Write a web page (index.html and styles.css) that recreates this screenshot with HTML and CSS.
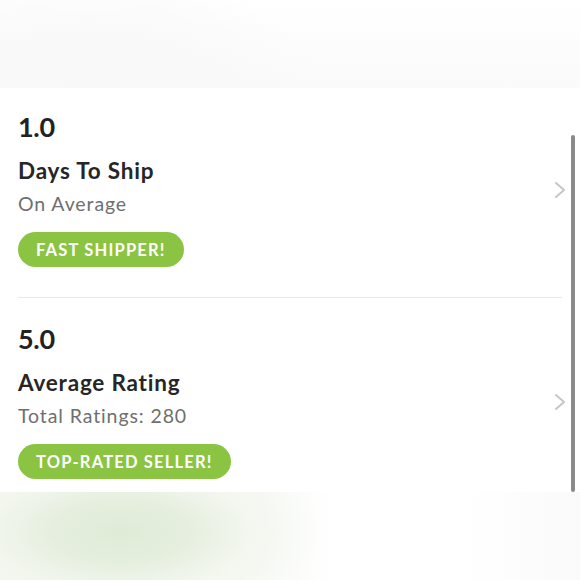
FILE: index.html
```html
<!DOCTYPE html>
<html>
<head>
<meta charset="utf-8">
<link rel="stylesheet" href="styles.css">
</head>
<body>
<div class="screen">
  <div class="top-blur"></div>
  <main class="sheet">
    <div class="row">
      <div class="content">
        <div class="value">1.0</div>
        <div class="title">Days To Ship</div>
        <div class="sub">On Average</div>
        <span class="badge">FAST SHIPPER!</span>
      </div>
      <svg class="chev" width="12" height="18" viewBox="0 0 12 18"><path d="M2 2 L10 9 L2 16" fill="none" stroke="#c6c6c8" stroke-width="2" stroke-linecap="round" stroke-linejoin="round"/></svg>
    </div>
    <div class="divider"></div>
    <div class="row row2">
      <div class="content">
        <div class="value">5.0</div>
        <div class="title">Average Rating</div>
        <div class="sub">Total Ratings: 280</div>
        <span class="badge">TOP-RATED SELLER!</span>
      </div>
      <svg class="chev" width="12" height="18" viewBox="0 0 12 18"><path d="M2 2 L10 9 L2 16" fill="none" stroke="#c6c6c8" stroke-width="2" stroke-linecap="round" stroke-linejoin="round"/></svg>
    </div>
    <div class="scrollbar"></div>
  </main>
  <div class="bottom-blur"></div>
</div>
</body>
</html>
```
FILE: styles.css
```css
html, body {
  margin: 0;
  padding: 0;
  background: #ffffff;
}
.screen {
  width: 580px;
  height: 580px;
  overflow: hidden;
  font-family: Lato, "Open Sans", sans-serif;
  display: flex;
  flex-direction: column;
}
.top-blur {
  height: 88px;
  flex: none;
  background:
    radial-gradient(ellipse 260px 200px at 90px 160px, #f7f7f7 0%, #f9f9f9 60%, rgba(250,250,250,0) 100%),
    linear-gradient(180deg, #ffffff 0%, #fcfcfc 60%, #fafafa 100%);
}
.sheet {
  position: relative;
  height: 404px;
  flex: none;
  overflow: hidden;
  background: #ffffff;
}
.row {
  display: flex;
  align-items: center;
  justify-content: space-between;
  padding: 21px 14px 30px 18px;
}
.row2 {
  padding-top: 23px;
}
.content {
  display: flex;
  flex-direction: column;
  align-items: flex-start;
}
.value {
  font-size: 27px;
  font-weight: 700;
  color: #222222;
  line-height: 36px;
  letter-spacing: -0.3px;
}
.title {
  margin-top: 12px;
  font-size: 22.5px;
  font-weight: 700;
  color: #262626;
  line-height: 28px;
  letter-spacing: 0.8px;
}
.sub {
  margin-top: 5px;
  font-size: 19.5px;
  color: #6f6f6f;
  line-height: 28px;
  letter-spacing: 0.9px;
}
.badge {
  margin-top: 14px;
  height: 35px;
  box-sizing: border-box;
  padding: 0 18px;
  border-radius: 18px;
  background: #8bc443;
  color: #ffffff;
  font-size: 16.5px;
  font-weight: 700;
  letter-spacing: 1.2px;
  display: inline-flex;
  align-items: center;
}
.chev {
  flex: none;
  margin-top: 4px;
}
.divider {
  height: 1px;
  background: #e9e9e9;
  margin: 0 18px;
}
.scrollbar {
  position: absolute;
  right: 5px;
  top: 47px;
  width: 4px;
  bottom: 0;
  border-radius: 2px;
  background: #8a8a8a;
}
.bottom-blur {
  height: 88px;
  flex: none;
  background:
    radial-gradient(ellipse 200px 90px at 120px 40px, #e0ebd6 0%, #e6efdf 35%, rgba(240,245,235,0.6) 65%, rgba(255,255,255,0) 100%),
    linear-gradient(90deg, #f5f8f2 0%, #f8faf6 45%, #ffffff 58%, #ffffff 80%, #fafafa 100%);
}
```
